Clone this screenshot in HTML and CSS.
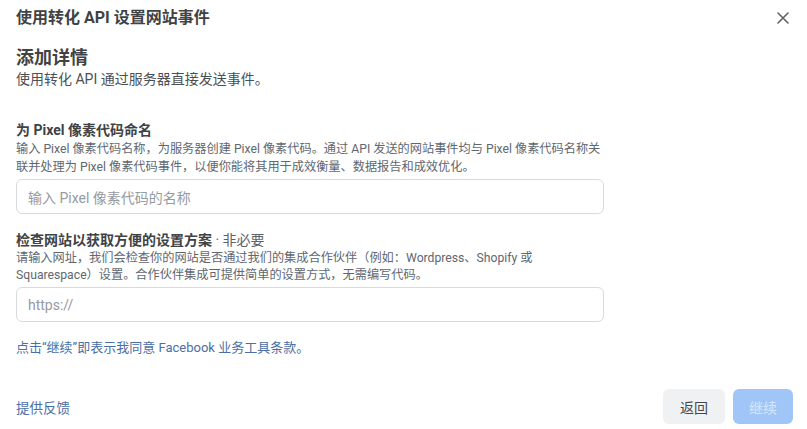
FILE: index.html
```html
<!DOCTYPE html>
<html lang="zh-CN">
<head>
<meta charset="utf-8">
<link rel="stylesheet" href="styles.css">
</head>
<body>
<div class="dialog">
  <header class="header">
    <div class="title">使用转化 API 设置网站事件</div>
    <button class="close" aria-label="关闭">
      <svg width="14" height="14" viewBox="0 0 14 14"><path d="M2 2 L12 12 M12 2 L2 12" stroke="#5f6368" stroke-width="1.6" stroke-linecap="round" fill="none"/></svg>
    </button>
  </header>
  <main class="body">
    <h2 class="heading">添加详情</h2>
    <p class="sub">使用转化 API 通过服务器直接发送事件。</p>

    <section class="field first">
      <div class="label">为 Pixel 像素代码命名</div>
      <p class="desc">输入 Pixel 像素代码名称，为服务器创建 Pixel 像素代码。通过 API 发送的网站事件均与 Pixel 像素代码名称关<br>联并处理为 Pixel 像素代码事件，以便你能将其用于成效衡量、数据报告和成效优化。</p>
      <div class="input"><span class="ph">输入 Pixel 像素代码的名称</span></div>
    </section>

    <section class="field second">
      <div class="label">检查网站以获取方便的设置方案 <span class="opt">· 非必要</span></div>
      <p class="desc">请输入网址，我们会检查你的网站是否通过我们的集成合作伙伴（例如：Wordpress、Shopify 或<br>Squarespace）设置。合作伙伴集成可提供简单的设置方式，无需编写代码。</p>
      <div class="input"><span class="ph">https://</span></div>
    </section>

    <p class="terms">点击“继续”即表示我同意 Facebook 业务工具条款。</p>
  </main>
  <footer class="footer">
    <span class="feedback">提供反馈</span>
    <div class="actions">
      <button class="btn back">返回</button>
      <button class="btn next">继续</button>
    </div>
  </footer>
</div>
</body>
</html>
```

FILE: styles.css
```css
* { box-sizing: border-box; }
html, body { margin: 0; padding: 0; background: #fff; }
body {
  width: 807px;
  height: 429px;
  overflow: hidden;
  font-family: Roboto, "Noto Sans CJK SC", sans-serif;
  color: #444950;
}
.dialog {
  display: flex;
  flex-direction: column;
  height: 429px;
}
.header {
  display: flex;
  justify-content: space-between;
  align-items: center;
  padding: 8px 17px 0 16px;
  height: 28px;
}
.title {
  font-size: 16px;
  line-height: 20px;
  font-weight: 700;
  color: #404244;
}
.close {
  border: 0;
  background: none;
  padding: 0;
  width: 14px;
  height: 14px;
  display: flex;
}
.body {
  padding: 0 16px;
  width: 620px;
}
.heading {
  margin: 19px 0 0;
  font-size: 18px;
  line-height: 22px;
  font-weight: 700;
  color: #404244;
}
.sub {
  margin: 1px 0 0;
  font-size: 14px;
  line-height: 18px;
  color: #4b4f56;
}
.field.first { margin-top: 32px; }
.field.second { margin-top: 16px; }
.label {
  font-size: 14px;
  line-height: 20px;
  font-weight: 700;
  color: #404244;
}
.opt { font-weight: 400; color: #5d6168; }
.desc {
  margin: 0;
  font-size: 12.2px;
  line-height: 18px;
  color: #606770;
  white-space: nowrap;
}
.second .desc { line-height: 17px; }
.input {
  margin-top: 3px;
  width: 588px;
  height: 35px;
  border: 1px solid #d8dade;
  border-radius: 6px;
  display: flex;
  align-items: center;
  padding: 0 11px;
}
.ph {
  font-size: 14px;
  color: #969aa1;
}
.terms {
  margin: 17px 0 0;
  font-size: 13px;
  line-height: 18px;
  color: #4a6fa5;
}
.footer {
  margin-top: auto;
  display: flex;
  justify-content: space-between;
  align-items: center;
  padding: 0 14px 5px 16px;
}
.feedback {
  font-size: 13.5px;
  color: #4a6fa5;
}
.actions { display: flex; gap: 8px; }
.btn {
  border: 0;
  height: 35px;
  border-radius: 6px;
  font-family: inherit;
  font-size: 14px;
  padding: 0;
}
.back {
  width: 62px;
  background: #f0f1f2;
  color: #444950;
}
.next {
  width: 60px;
  background: #9fc6f7;
  color: #d6e7fc;
}
```
